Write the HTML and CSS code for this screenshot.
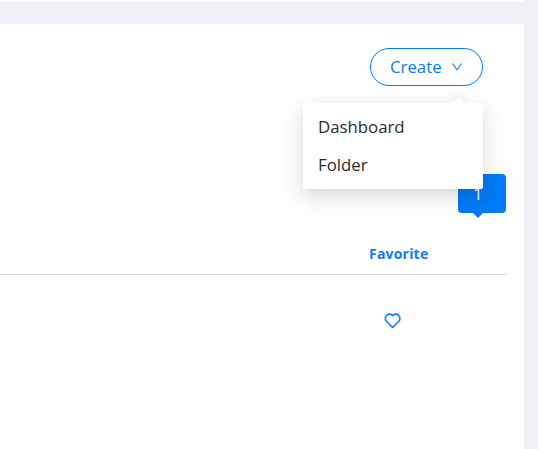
FILE: index.html
```
<!DOCTYPE html>
<html lang="en">
<head>
  <meta charset="UTF-8" />
  <meta name="viewport" content="width=device-width, initial-scale=1.0"/>
  <title>Dashboards</title>
  <link rel="stylesheet" href="styles.css">
</head>
<body>
  <div class="top-card"></div>

  <main class="panel">
    <div class="toolbar">
      <div class="dropdown">
        <button class="create-btn">
          <span class="create-label">Create</span>
          <svg class="chevron" viewBox="64 64 896 896" fill="currentColor"><path d="M884 256h-75c-5.1 0-9.9 2.5-12.9 6.6L512 654.2 227.9 262.6c-3-4.1-7.8-6.6-12.9-6.6h-75c-6.5 0-10.3 7.4-6.5 12.7l352.6 486.1c12.8 17.6 39 17.6 51.7 0l352.6-486.1c3.9-5.3.1-12.7-6.4-12.7z"/></svg>
        </button>
        <div class="menu">
          <a class="menu-item">Dashboard</a>
          <a class="menu-item">Folder</a>
        </div>
      </div>
    </div>

    <div class="count-row">
      <div class="count">1</div>
    </div>

    <div class="table">
      <div class="table-head">
        <span>Favorite</span>
      </div>
      <div class="table-row">
        <svg class="heart" viewBox="0 0 18 16" fill="none" stroke="currentColor" stroke-width="1.6" stroke-linejoin="round"><path d="M8.6 2.7C7 .7 4.4 .7 2.7 2.3 .8 4.1 .8 6.7 2.6 8.5L8.6 14.5l6-6C16.4 6.7 16.4 4.1 14.5 2.3 12.8 .7 10.2 .7 8.6 2.7z"/></svg>
      </div>
    </div>
  </main>
</body>
</html>
```
FILE: styles.css
```
body {
  font-family: "Open Sans", "Noto Sans", sans-serif;
  margin: 0;
  background-color: #f0f1f7;
  height: 449px;
  overflow: hidden;
}

.top-card {
  height: 2px;
  width: 524px;
  background-color: #fff;
  border-bottom-right-radius: 2px;
}

.panel {
  box-sizing: border-box;
  width: 524px;
  height: 425px;
  margin-top: 22px;
  padding: 24px 18px 0 0;
  background-color: #fff;
}

.toolbar {
  display: flex;
  justify-content: flex-end;
  padding-right: 23px;
}

.dropdown {
  position: relative;
}

.create-btn {
  display: flex;
  align-items: center;
  gap: 9px;
  box-sizing: border-box;
  width: 113px;
  height: 38px;
  padding: 0 0 0 19px;
  border: 1px solid #007bf7;
  border-radius: 19px;
  background-color: #fff;
  color: #1677f2;
  font-family: inherit;
  font-size: 16.8px;
}

.create-label {
  margin-bottom: 2px;
}

.chevron {
  width: 12px;
  height: 12px;
}

.menu {
  position: absolute;
  z-index: 2;
  top: 55px;
  right: 0;
  box-sizing: border-box;
  width: 180px;
  height: 86px;
  padding: 5px 0;
  border-radius: 2px;
  background-color: #fff;
  box-shadow: 0 3px 6px -4px rgba(0,0,0,0.12), 0 6px 16px rgba(0,0,0,0.08), 0 9px 28px 8px rgba(0,0,0,0.05);
}

.menu::before {
  content: "";
  position: absolute;
  top: -5px;
  right: 19px;
  width: 10px;
  height: 10px;
  background-color: #fff;
  box-shadow: -2px -2px 5px rgba(0,0,0,0.06);
  transform: rotate(45deg);
  clip-path: polygon(-60% -60%, 160% -60%, 100% 0, 0 100%, -60% 160%);
}

.menu-item {
  display: block;
  padding-left: 15px;
  line-height: 38px;
  font-size: 16.8px;
  color: #2b2b2b;
}

.count-row {
  display: flex;
  justify-content: flex-end;
  margin-top: 88px;
}

.count {
  position: relative;
  box-sizing: border-box;
  width: 48px;
  height: 39px;
  padding-left: 15px;
  border-radius: 4px;
  background-color: #007bf7;
  color: #fff;
  font-size: 17px;
  line-height: 40px;
}

.count::after {
  content: "";
  position: absolute;
  top: 38px;
  left: 14px;
  border: 6px solid transparent;
  border-top-color: #007bf7;
  border-bottom: 0;
}

.table-head {
  box-sizing: border-box;
  height: 62px;
  padding: 31px 0 0 369px;
  border-bottom: 1px solid #dadbdc;
  color: #147af3;
  font-size: 14px;
  font-weight: 700;
  line-height: 20px;
  letter-spacing: 0.2px;
}

.table-row {
  display: flex;
  padding: 38px 0 0 384px;
  color: #147af3;
}

.heart {
  width: 18px;
  height: 16px;
}
```
